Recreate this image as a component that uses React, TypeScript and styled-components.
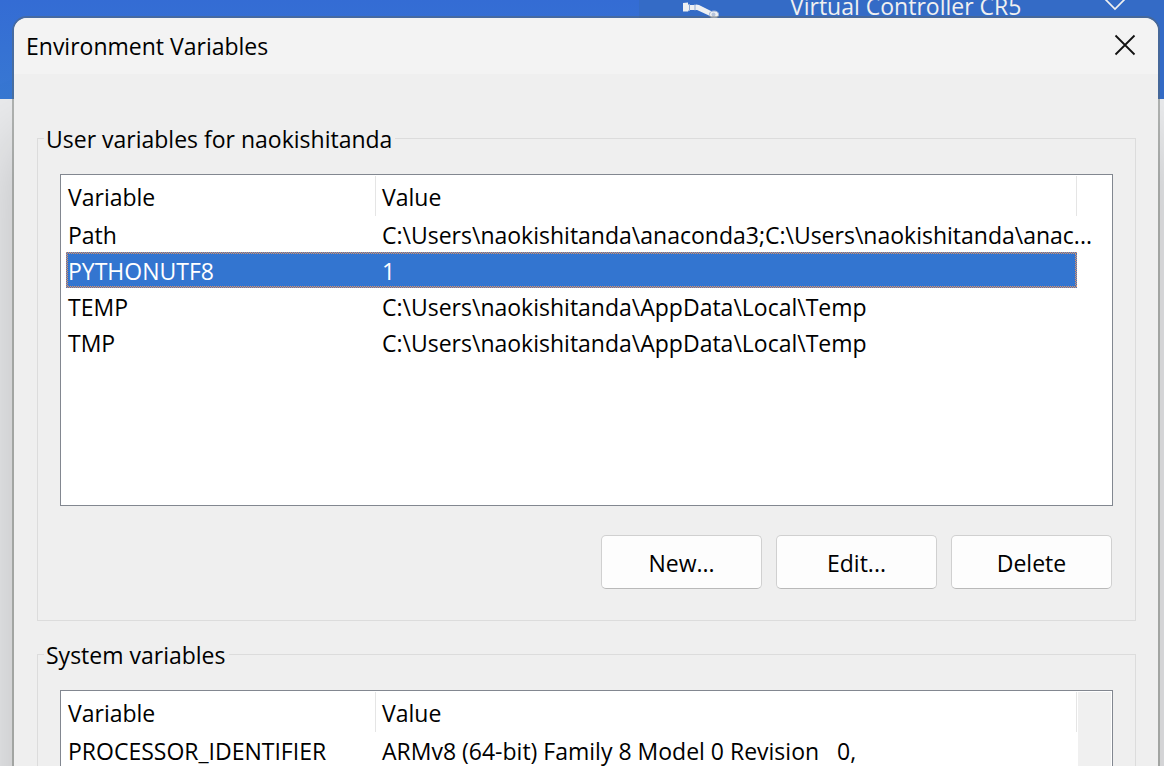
import React from "react";
import styled, { createGlobalStyle } from "styled-components";

const GlobalStyle = createGlobalStyle`
  * { box-sizing: border-box; }
  body {
    margin: 0;
    font-family: "Open Sans", "Noto Sans", sans-serif;
    font-size: 23px;
    font-weight: 400;
    line-height: 32px;
    color: #000;
  }
`;

const Desktop = styled.div`
  position: relative;
  height: 100vh;
  overflow: hidden;
  background: #e9eaec;
`;

const AppBar = styled.header`
  display: flex;
  justify-content: flex-end;
  height: 99px;
  background: linear-gradient(#346cd4, #3878d2);
`;

const ControllerPanel = styled.div`
  display: flex;
  align-items: flex-start;
  width: 525px;
  padding: 0 38px 0 43px;
  background: #346bc6;
  color: #f0f0f0;
`;

const ControllerName = styled.span`
  flex: 1;
  margin: -10px 0 0 70px;
  white-space: nowrap;
`;

const Dialog = styled.main`
  position: absolute;
  inset: 18px 6px 0 14px;
  display: flex;
  flex-direction: column;
  border-radius: 13px 13px 0 0;
  background: #efefef;
  box-shadow: 0 0 0 2px rgba(96, 100, 92, 0.42), 0 120px 70px rgba(0, 0, 0, 0.2);
`;

const TitleBar = styled.div`
  display: flex;
  flex: none;
  align-items: center;
  justify-content: space-between;
  height: 56px;
  padding: 0 22px 2px 12px;
  border-radius: 13px 13px 0 0;
  background: #f3f3f3;
`;

const Title = styled.h1`
  margin: 0;
  padding-top: 2px;
  font-size: 23px;
  font-weight: inherit;
`;

const CloseButton = styled.button`
  display: flex;
  padding: 0;
  border: 0;
  background: none;
`;

const DialogBody = styled.div`
  display: flex;
  flex: 1;
  flex-direction: column;
  gap: 17px;
  min-height: 0;
  padding: 48px 22px 0 23px;
  overflow: hidden;
`;

const Group = styled.fieldset`
  flex: none;
  min-width: 0;
  margin: 0;
  padding: 20px 22px 31px;
  border: 1px solid #dcdcdc;
`;

const GroupLabel = styled.legend`
  margin-left: -16px;
  padding: 2px 3px 0 2px;
  line-height: 30px;
`;

const ListView = styled.div`
  display: flex;
  height: 332px;
  padding-left: 5px;
  border: 1px solid #828790;
  background: #fff;
`;

const ListSide = styled.div`
  flex: none;
  width: 35px;
  padding: 1px;
`;

const ScrollTrack = styled.div`
  height: 100%;
  background: #f0f0f0;
`;

const Table = styled.table`
  width: 100%;
  align-self: flex-start;
  min-width: 0;
  table-layout: fixed;
  border-collapse: separate;
  border-spacing: 0;
`;

const HeadCell = styled.th`
  height: 41px;
  padding: 3px 0 0 6px;
  background: linear-gradient(#e5e5e5, #e5e5e5) right bottom / 1px 40px no-repeat;
  font-weight: inherit;
  text-align: left;

  &:first-child {
    width: 310px;
    padding-left: 2px;
  }
`;

const Row = styled.tr<{ $selected?: boolean }>`
  ${({ $selected }) =>
    $selected &&
    `
    --across: repeating-linear-gradient(90deg, #e8935c 0 1px, #3375d0 1px 2px);
    --across-odd: repeating-linear-gradient(90deg, #3375d0 0 1px, #e8935c 1px 2px);
    --down: repeating-linear-gradient(#e8935c 0 1px, #3375d0 1px 2px);
    --down-odd: repeating-linear-gradient(#3375d0 0 1px, #e8935c 1px 2px);
    color: #fff;
    background:
      var(--across) 0 0 / 100% 1px no-repeat,
      var(--across-odd) 0 1px / 100% 1px no-repeat,
      var(--across) 0 34px / 100% 1px no-repeat,
      var(--across-odd) 0 35px / 100% 1px no-repeat,
      var(--down) 0 0 / 1px 100% no-repeat,
      var(--down-odd) 1px 0 / 1px 100% no-repeat,
      var(--down) right 1px top 0 / 1px 100% no-repeat,
      var(--down-odd) right 0 top 0 / 1px 100% no-repeat,
      #3375d0;
  `}
`;

const Cell = styled.td`
  height: 36px;
  padding: 3px 0 1px 6px;
  white-space: pre;

  &:first-child {
    padding-left: 2px;
  }
`;

const Actions = styled.div`
  display: flex;
  justify-content: flex-end;
  gap: 14px;
  padding: 29px 1px 0 0;
`;

const Button = styled.button`
  width: 161px;
  height: 54px;
  padding: 2px 0 0;
  border: 1px solid #d0d0d0;
  border-bottom-color: #b9b9b9;
  border-radius: 5px;
  background: #fdfdfd;
  color: #000;
  font: inherit;
`;

type Variable = { name: string; value: string };

const userVariables: Variable[] = [
  { name: "Path", value: "C:\\Users\\naokishitanda\\anaconda3;C:\\Users\\naokishitanda\\anac..." },
  { name: "PYTHONUTF8", value: "1" },
  { name: "TEMP", value: "C:\\Users\\naokishitanda\\AppData\\Local\\Temp" },
  { name: "TMP", value: "C:\\Users\\naokishitanda\\AppData\\Local\\Temp" },
];

const systemVariables: Variable[] = [
  { name: "PROCESSOR_IDENTIFIER", value: "ARMv8 (64-bit) Family 8 Model 0 Revision   0," },
];

function VariableList({
  items,
  selected,
  scrollable,
}: {
  items: Variable[];
  selected?: string;
  scrollable?: boolean;
}) {
  return (
    <ListView>
      <Table>
        <thead>
          <tr>
            <HeadCell scope="col">Variable</HeadCell>
            <HeadCell scope="col">Value</HeadCell>
          </tr>
        </thead>
        <tbody>
          {items.map((item) => (
            <Row key={item.name} $selected={item.name === selected}>
              <Cell>{item.name}</Cell>
              <Cell>{item.value}</Cell>
            </Row>
          ))}
        </tbody>
      </Table>
      <ListSide>{scrollable && <ScrollTrack />}</ListSide>
    </ListView>
  );
}

function RobotArmIcon() {
  return (
    <svg width="38" height="20" viewBox="0 0 38 20" fill="#eef0f2" aria-hidden="true">
      <path d="M1 3L6 2.500V4L7 5V10L6 11.500H1Z" />
      <path d="M7.500 5H15V10H7.500Z" />
      <path d="M14 4.500L17 5L30 11.500L28 16L14 9.500Z" />
      <path d="M7.500 4V11M13 4V10.500" stroke="#8fa9d3" fill="none" />
      <ellipse cx="32" cy="14.500" rx="4.500" ry="3.500" stroke="#9fb3d6" />
      <circle cx="31.500" cy="14.500" r="2" fill="#b7c5dd" />
    </svg>
  );
}

function ChevronIcon() {
  return (
    <svg width="22" height="12" viewBox="0 0 22 12" fill="none" aria-hidden="true">
      <path d="M1 -1L11 9L21 -1" stroke="#f0f0f0" strokeWidth="1.700" />
    </svg>
  );
}

function CloseIcon() {
  return (
    <svg width="22" height="22" viewBox="0 0 22 22" fill="none" aria-hidden="true">
      <path d="M1.500 1.500L20.500 20.500M20.500 1.500L1.500 20.500" stroke="#111" strokeWidth="1.800" />
    </svg>
  );
}

export default function App() {
  return (
    <>
      <GlobalStyle />
      <Desktop>
        <AppBar>
          <ControllerPanel>
            <RobotArmIcon />
            <ControllerName>Virtual Controller CR5</ControllerName>
            <ChevronIcon />
          </ControllerPanel>
        </AppBar>
        <Dialog role="dialog" aria-labelledby="dialog-title">
          <TitleBar>
            <Title id="dialog-title">Environment Variables</Title>
            <CloseButton type="button" aria-label="Close">
              <CloseIcon />
            </CloseButton>
          </TitleBar>
          <DialogBody>
            <Group>
              <GroupLabel>User variables for naokishitanda</GroupLabel>
              <VariableList items={userVariables} selected="PYTHONUTF8" />
              <Actions>
                <Button type="button">New...</Button>
                <Button type="button">Edit...</Button>
                <Button type="button">Delete</Button>
              </Actions>
            </Group>
            <Group>
              <GroupLabel>System variables</GroupLabel>
              <VariableList items={systemVariables} scrollable />
            </Group>
          </DialogBody>
        </Dialog>
      </Desktop>
    </>
  );
}
